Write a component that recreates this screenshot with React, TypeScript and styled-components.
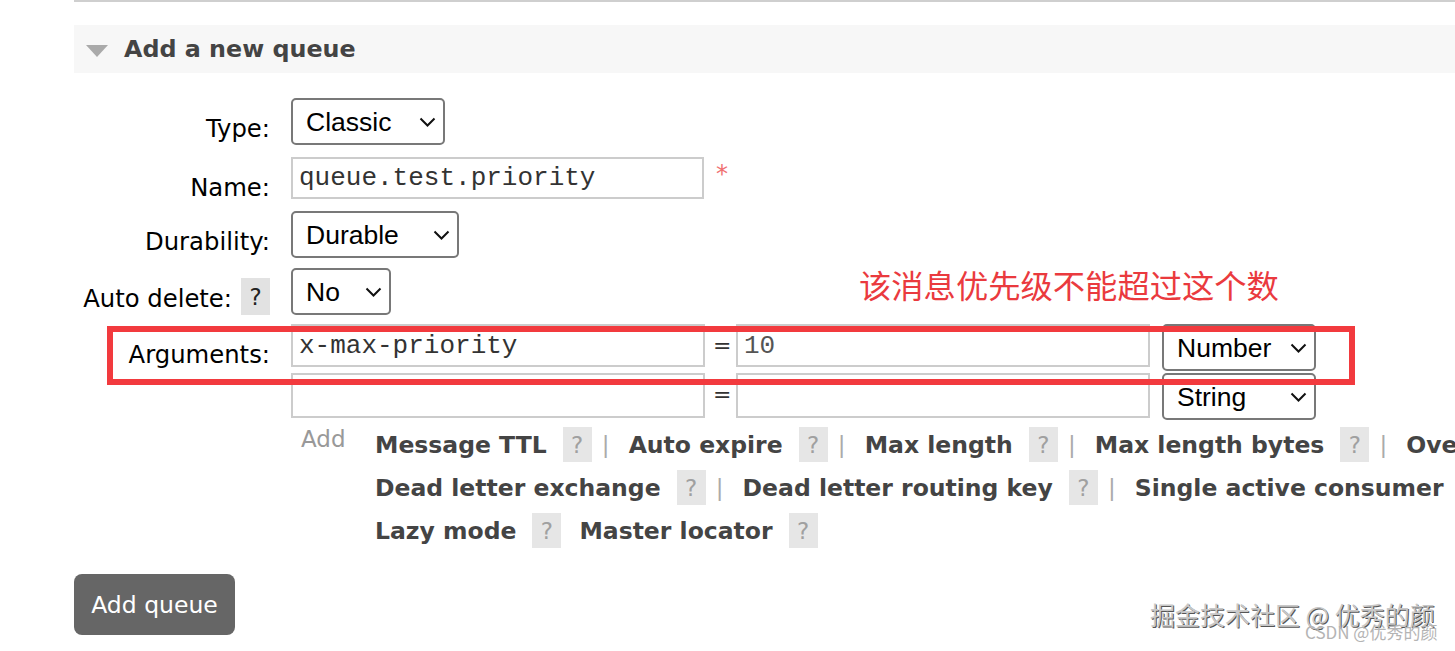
import React from 'react';
import styled, { createGlobalStyle } from 'styled-components';

const Global = createGlobalStyle`
  html, body { margin: 0; padding: 0; background: #fff; }
  body {
    width: 1455px;
    height: 651px;
    overflow: hidden;
    font-family: "DejaVu Sans", Verdana, sans-serif;
  }
`;

const Page = styled.div`
  position: relative;
  width: 1455px;
  height: 651px;
  overflow: hidden;
`;

const Main = styled.div`
  margin-left: 74px;
  border-top: 2px solid #cfcfcf;
  padding-top: 23px;
`;

const SectionHeader = styled.h2`
  margin: 0;
  height: 48px;
  background: #f7f7f7;
  display: flex;
  align-items: center;
  gap: 16px;
  padding-left: 12px;
  font: bold 23.8px "DejaVu Sans", Verdana, sans-serif;
  color: #444;
  white-space: nowrap;
`;

const Caret = styled.span`
  width: 0;
  height: 0;
  border-left: 11px solid transparent;
  border-right: 11px solid transparent;
  border-top: 12px solid #aaa;
  margin-top: 3px;
`;

const Form = styled.div`
  display: grid;
  grid-template-columns: 196px 1fr;
  column-gap: 21px;
  margin-top: 25px;
`;

const Label = styled.div`
  display: flex;
  justify-content: flex-end;
  align-items: flex-start;
  gap: 9px;
  padding-top: 17px;
  font-size: 24.3px;
  line-height: 28px;
  color: #000;
  white-space: nowrap;
`;

const Cell = styled.div<{ $gap: number }>`
  display: flex;
  align-items: flex-start;
  padding-bottom: ${(p) => p.$gap}px;
  white-space: nowrap;
`;

const HelpBox = styled.span<{ $dark?: boolean }>`
  display: inline-flex;
  align-items: center;
  justify-content: center;
  flex: none;
  width: 29px;
  height: ${(p) => (p.$dark ? 37 : 35)}px;
  margin-top: ${(p) => (p.$dark ? -7 : 0)}px;
  background: ${(p) => (p.$dark ? '#e2e2e2' : '#e6e6e6')};
  color: ${(p) => (p.$dark ? '#222' : '#a0a0a0')};
  font: normal 23px "DejaVu Sans", Verdana, sans-serif;
`;

const SelectWrap = styled.div<{ $w: number }>`
  position: relative;
  width: ${(p) => p.$w}px;
  flex: none;
`;

const Select = styled.select`
  appearance: none;
  -webkit-appearance: none;
  display: block;
  box-sizing: border-box;
  width: 100%;
  height: 47px;
  margin: 0;
  border: 2px solid #787878;
  border-radius: 5px;
  background: #fff;
  padding: 0 0 0 13px;
  font: 26.5px "Liberation Sans", Arial, sans-serif;
  color: #000;
  outline: none;
`;

const Chevron = styled.svg`
  position: absolute;
  right: 9px;
  top: 50%;
  width: 17px;
  height: 10px;
  transform: translateY(-50%);
  pointer-events: none;
`;

const TextInput = styled.input<{ $w: number; $h?: number; $tone?: string }>`
  box-sizing: border-box;
  width: ${(p) => p.$w}px;
  height: ${(p) => p.$h ?? 42}px;
  margin: 0;
  border: 2px solid #cccccc;
  padding: 0 6px 0 6px;
  font: 26px "Liberation Mono", "Courier New", monospace;
  color: ${(p) => p.$tone ?? '#333'};
  background: #fff;
  outline: none;
  flex: none;
`;

const Required = styled.span`
  margin-left: 12px;
  margin-top: 3px;
  color: #f07070;
  font: 24px "DejaVu Sans", sans-serif;
`;

const ArgBlock = styled.div`
  display: flex;
  flex-direction: column;
  gap: 2px;
`;

const ArgRow = styled.div`
  display: flex;
  align-items: flex-start;
`;

const Equals = styled.span`
  width: 15px;
  margin: 0 8px 0 8px;
  font: 22px/43px "DejaVu Sans", sans-serif;
  color: #333;
  text-align: center;
`;

const TypeSlot = styled.div`
  margin-left: 12px;
`;

const AddRow = styled.div`
  display: flex;
  align-items: flex-start;
`;

const AddText = styled.span`
  box-sizing: border-box;
  width: 84px;
  padding-left: 10px;
  font-size: 23px;
  line-height: 32px;
  color: #999;
  flex: none;
`;

const LinkLines = styled.div`
  display: flex;
  flex-direction: column;
`;

const LinkLine = styled.div`
  display: flex;
  align-items: center;
  height: 43px;
  white-space: nowrap;
`;

const Item = styled.span<{ $after: number }>`
  display: inline-flex;
  align-items: center;
  gap: 16px;
  margin-right: ${(p) => p.$after}px;
  flex: none;
`;

const LinkText = styled.span`
  font: bold 23.5px "DejaVu Sans", Verdana, sans-serif;
  color: #444;
`;

const Sep = styled.span`
  width: 8px;
  margin: 0 19px 0 10px;
  text-align: center;
  font: 23px "DejaVu Sans", sans-serif;
  color: #aaa;
  flex: none;
`;

const Button = styled.button`
  margin-top: 22px;
  width: 161px;
  height: 61px;
  border: none;
  border-radius: 8px;
  background: #666;
  color: #fff;
  font: 23.5px "DejaVu Sans", Verdana, sans-serif;
  padding: 0;
`;

const NoteBox = styled.div`
  position: absolute;
  left: 107px;
  top: 326px;
  width: 1248px;
  height: 59px;
  box-sizing: border-box;
  border: 6px solid #f23a3e;
  pointer-events: none;
`;

const NoteText = styled.div`
  position: absolute;
  left: 859px;
  top: 266px;
  font: 32.3px/36px "Noto Sans CJK SC", sans-serif;
  color: #ea3a3e;
  white-space: nowrap;
`;

const Watermark = styled.div`
  position: absolute;
  left: 1150px;
  top: 597px;
  font: 25px/34px "Noto Sans CJK SC", sans-serif;
  color: #c8c8c8;
  text-shadow: 1px 1px 0 #555, -1px -1px 0 #fff;
  white-space: nowrap;
`;

const SubMark = styled.div`
  position: absolute;
  left: 1305px;
  top: 620px;
  font: 17px/24px "Noto Sans CJK SC", sans-serif;
  color: #b4b4b4;
  white-space: nowrap;
`;

type SelProps = { w: number; value: string; options: string[] };

function Dropdown({ w, value, options }: SelProps) {
  return (
    <SelectWrap $w={w}>
      <Select defaultValue={value}>
        {options.map((o) => (
          <option key={o}>{o}</option>
        ))}
      </Select>
      <Chevron viewBox="0 0 17 10">
        <polyline points="1.5,1.5 8.5,8.5 15.5,1.5" fill="none" stroke="#111" strokeWidth="2" />
      </Chevron>
    </SelectWrap>
  );
}

type Link = { name: string; sep: boolean };

const lines: Link[][] = [
  [
    { name: 'Message TTL', sep: true },
    { name: 'Auto expire', sep: true },
    { name: 'Max length', sep: true },
    { name: 'Max length bytes', sep: true },
    { name: 'Overflow behaviour', sep: false },
  ],
  [
    { name: 'Dead letter exchange', sep: true },
    { name: 'Dead letter routing key', sep: true },
    { name: 'Single active consumer', sep: true },
    { name: 'Maximum priority', sep: false },
  ],
  [
    { name: 'Lazy mode', sep: false },
    { name: 'Master locator', sep: false },
  ],
];

export default function App() {
  return (
    <Page>
      <Global />
      <Main>
        <SectionHeader>
          <Caret />
          Add a new queue
        </SectionHeader>
        <Form>
          <Label>Type:</Label>
          <Cell $gap={12}>
            <Dropdown w={154} value="Classic" options={['Classic', 'Quorum']} />
          </Cell>

          <Label>Name:</Label>
          <Cell $gap={12}>
            <TextInput $w={413} defaultValue="queue.test.priority" />
            <Required>*</Required>
          </Cell>

          <Label>Durability:</Label>
          <Cell $gap={10}>
            <Dropdown w={168} value="Durable" options={['Durable', 'Transient']} />
          </Cell>

          <Label>
            Auto delete:
            <HelpBox $dark>?</HelpBox>
          </Label>
          <Cell $gap={9}>
            <Dropdown w={100} value="No" options={['No', 'Yes']} />
          </Cell>

          <Label>Arguments:</Label>
          <Cell $gap={3}>
            <ArgBlock>
              <ArgRow>
                <TextInput $w={414} $h={43} defaultValue="x-max-priority" />
                <Equals>=</Equals>
                <TextInput $w={414} $h={43} $tone="#555" defaultValue="10" />
                <TypeSlot>
                  <Dropdown w={154} value="Number" options={['String', 'Number', 'Boolean', 'List']} />
                </TypeSlot>
              </ArgRow>
              <ArgRow>
                <TextInput $w={414} $h={45} defaultValue="" />
                <Equals>=</Equals>
                <TextInput $w={414} $h={45} defaultValue="" />
                <TypeSlot>
                  <Dropdown w={154} value="String" options={['String', 'Number', 'Boolean', 'List']} />
                </TypeSlot>
              </ArgRow>
            </ArgBlock>
          </Cell>

          <div />
          <Cell $gap={0}>
            <AddRow>
              <AddText>Add</AddText>
              <LinkLines>
                {lines.map((line, i) => (
                  <LinkLine key={i}>
                    {line.map((l, j) => (
                      <React.Fragment key={l.name}>
                        <Item $after={l.sep || j === line.length - 1 ? 0 : 18}>
                          <LinkText>{l.name}</LinkText>
                          <HelpBox>?</HelpBox>
                        </Item>
                        {l.sep && <Sep>|</Sep>}
                      </React.Fragment>
                    ))}
                  </LinkLine>
                ))}
              </LinkLines>
            </AddRow>
          </Cell>
        </Form>
        <Button>Add queue</Button>
      </Main>
      <NoteText>该消息优先级不能超过这个数</NoteText>
      <NoteBox />
      <Watermark>掘金技术社区 @ 优秀的颜</Watermark>
      <SubMark>CSDN @优秀的颜</SubMark>
    </Page>
  );
}
